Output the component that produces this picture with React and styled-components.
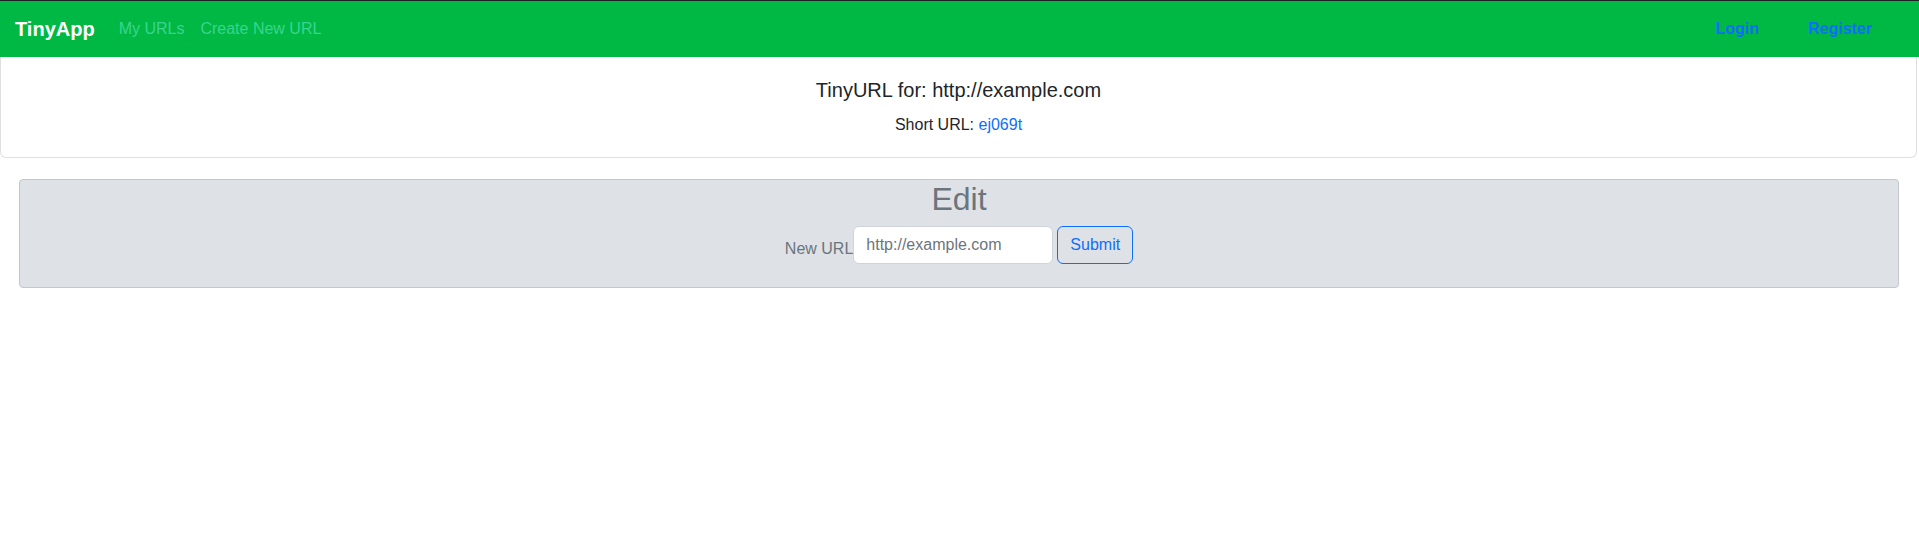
import React from "react";
import styled, { createGlobalStyle } from "styled-components";

const Global = createGlobalStyle`
  html, body { margin: 0; padding: 0; background: #fff; }
  body {
    font-family: "Liberation Sans", Arial, sans-serif;
    font-size: 16px;
    line-height: 1.5;
    color: #212529;
  }
`;

const Navbar = styled.nav`
  display: flex;
  align-items: center;
  height: 56px;
  border-top: 1px solid #1e2124;
  background: #00b944;
  padding: 0 15px;
  box-sizing: content-box;
`;

const Brand = styled.a`
  color: #fff;
  font-weight: 700;
  font-size: 20px;
  line-height: 30px;
  text-decoration: none;
  margin-right: 24px;
`;

const NavLinks = styled.div`
  display: flex;
  gap: 16px;
  flex: 1;
`;

const NavLink = styled.a`
  color: #3ad490;
  font-size: 16px;
  text-decoration: none;
`;

const AuthLinks = styled.div`
  display: flex;
  gap: 49px;
  margin-right: 32px;
`;

const AuthLink = styled.a`
  color: #0d6efd;
  font-weight: 700;
  font-size: 16px;
  text-decoration: none;
`;

const Card = styled.section`
  margin-right: 2px;
  border: 1px solid rgba(0, 0, 0, 0.125);
  border-top: none;
  border-radius: 0 0 6px 6px;
  padding: 21px 16px 20px;
  text-align: center;
`;

const CardTitle = styled.h5`
  margin: 0 0 11px;
  font-size: 20px;
  font-weight: 400;
  line-height: 24px;
`;

const CardText = styled.p`
  margin: 0;
  font-size: 16px;
  line-height: 24px;
`;

const ShortLink = styled.a`
  color: #0d6efd;
  text-decoration: none;
`;

const EditPanel = styled.section`
  margin: 21px 20px 0 19px;
  background: #dee2e6;
  border: 1px solid #c3c7cb;
  border-radius: 4px;
  padding: 0 0 23px;
  text-align: center;
`;

const EditTitle = styled.h2`
  margin: 0 0 8px;
  font-size: 32px;
  font-weight: 400;
  line-height: 38px;
  color: #6c757d;
`;

const Form = styled.form`
  display: flex;
  justify-content: center;
  align-items: flex-end;
`;

const Label = styled.label`
  color: #6c757d;
  font-size: 16px;
  line-height: 24px;
  padding-bottom: 3px;
`;

const Input = styled.input`
  width: 200px;
  height: 38px;
  box-sizing: border-box;
  padding: 6px 12px;
  font-family: inherit;
  font-size: 16px;
  color: #212529;
  background: #fff;
  border: 1px solid #ced4da;
  border-radius: 6px;
  outline: none;
  &::placeholder { color: #6c757d; }
`;

const SubmitButton = styled.button`
  margin-left: 4px;
  height: 38px;
  padding: 6px 12px;
  font-family: inherit;
  font-size: 16px;
  color: #0d6efd;
  background: transparent;
  border: 1px solid #0d6efd;
  border-radius: 6px;
  cursor: pointer;
`;

export default function App() {
  return (
    <>
      <Global />
      <Navbar>
        <Brand href="#">TinyApp</Brand>
        <NavLinks>
          <NavLink href="#">My URLs</NavLink>
          <NavLink href="#">Create New URL</NavLink>
        </NavLinks>
        <AuthLinks>
          <AuthLink href="#">Login</AuthLink>
          <AuthLink href="#">Register</AuthLink>
        </AuthLinks>
      </Navbar>
      <Card>
        <CardTitle>TinyURL for: http://example.com</CardTitle>
        <CardText>
          Short URL: <ShortLink href="#">ej069t</ShortLink>
        </CardText>
      </Card>
      <EditPanel>
        <EditTitle>Edit</EditTitle>
        <Form onSubmit={(e) => e.preventDefault()}>
          <Label htmlFor="newurl">New URL</Label>
          <Input id="newurl" type="text" placeholder="http://example.com" />
          <SubmitButton type="submit">Submit</SubmitButton>
        </Form>
      </EditPanel>
    </>
  );
}
